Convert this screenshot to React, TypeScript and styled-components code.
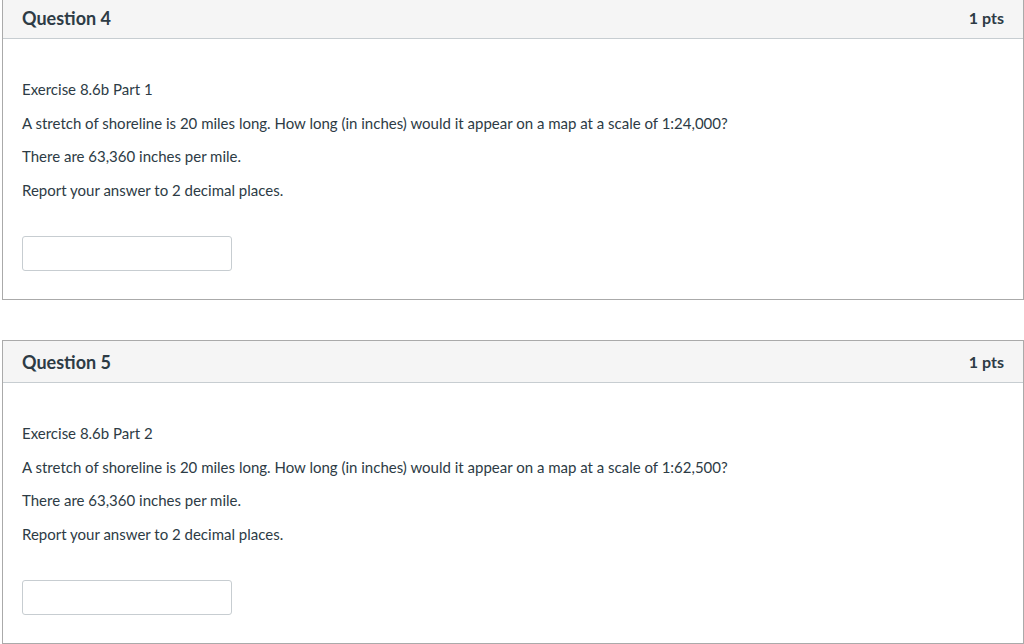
import * as React from "react";
import styled, { createGlobalStyle } from "styled-components";

const GlobalStyle = createGlobalStyle`
  html, body {
    margin: 0;
    padding: 0;
    background: #ffffff;
    font-family: Lato, "Noto Sans", sans-serif;
    color: #2d3b45;
    overflow: hidden;
  }
`;

const Page = styled.div`
  display: flex;
  flex-direction: column;
  gap: 40px;
  padding: 0 0 0 2px;
  margin-top: -4px;
`;

const Card = styled.div`
  border: 1px solid #aaaaaa;
  background: #ffffff;
  display: flex;
  flex-direction: column;
`;

const Header = styled.div`
  display: flex;
  align-items: center;
  justify-content: space-between;
  height: 41px;
  padding: 0 19px;
  background: #f5f5f5;
  border-bottom: 1px solid #c7cdd1;
`;

const Title = styled.h2`
  margin: 0;
  font-size: 18px;
  font-weight: 700;
  color: #2d3b45;
`;

const Points = styled.span`
  font-size: 16px;
  font-weight: 700;
  color: #2d3b45;
`;

const Body = styled.div`
  padding: 40px 19px 28px;
  display: flex;
  flex-direction: column;
`;

const Para = styled.p`
  margin: 0 0 12.5px;
  font-size: 15px;
  line-height: 21px;
`;

const AnswerInput = styled.input`
  box-sizing: border-box;
  width: 210px;
  height: 35px;
  margin-top: 23px;
  border: 1px solid #c7cdd1;
  border-radius: 3px;
  background: #ffffff;
  font-family: inherit;
  font-size: 14px;
  padding: 0 8px;
  outline: none;
`;

interface IQuestionProps {
  title: string;
  part: string;
  scale: string;
}

const Question: React.FC<IQuestionProps> = props => (
  <Card>
    <Header>
      <Title>{props.title}</Title>
      <Points>1 pts</Points>
    </Header>
    <Body>
      <Para>{props.part}</Para>
      <Para>
        A stretch of shoreline is 20 miles long. How long (in inches) would it
        appear on a map at a scale of {props.scale}?
      </Para>
      <Para>There are 63,360 inches per mile.</Para>
      <Para>Report your answer to 2 decimal places.</Para>
      <div>
        <AnswerInput type="text" />
      </div>
    </Body>
  </Card>
);

const App: React.FC = () => (
  <>
    <GlobalStyle />
    <Page>
      <Question title="Question 4" part="Exercise 8.6b Part 1" scale="1:24,000" />
      <Question title="Question 5" part="Exercise 8.6b Part 2" scale="1:62,500" />
    </Page>
  </>
);

export default App;
